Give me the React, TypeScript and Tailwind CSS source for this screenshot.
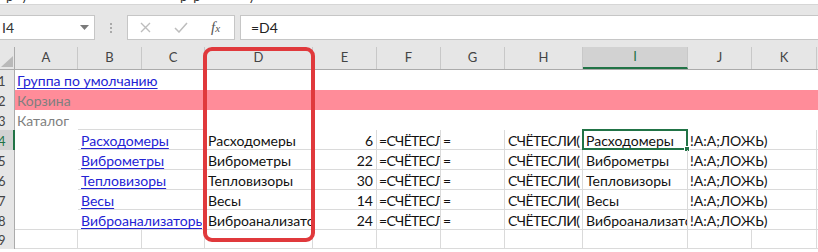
import React from 'react';

const COLS = [
  { name: 'A', w: 'w-[63px]' },
  { name: 'B', w: 'w-[64px]' },
  { name: 'C', w: 'w-[63px]' },
  { name: 'D', w: 'w-[108px]' },
  { name: 'E', w: 'w-[64px]' },
  { name: 'F', w: 'w-[64px]' },
  { name: 'G', w: 'w-[64px]' },
  { name: 'H', w: 'w-[78px]' },
  { name: 'I', w: 'w-[105px]' },
  { name: 'J', w: 'w-[64px]' },
  { name: 'K', w: 'w-[65px]' },
];

const ITEMS = [
  { name: 'Расходомеры', count: 6 },
  { name: 'Виброметры', count: 22 },
  { name: 'Тепловизоры', count: 30 },
  { name: 'Весы', count: 14 },
  { name: 'Виброанализаторы', count: 24 },
];

const grid = 'border-[#dadada]';
const link = 'text-[#2323d4] underline underline-offset-2 decoration-1';

function RowHead({ n, active = false }: { n: number; active?: boolean }) {
  return (
    <div
      className={`w-[15px] shrink-0 overflow-hidden flex items-center pt-[1px] leading-[20px] text-[13px] ${
        active
          ? 'bg-[#d2d2d2] text-[#217346] border-r-2 border-[#217346]'
          : 'bg-[#e6e6e6] text-[#444] border-r border-[#ababab]'
      }`}
    >
      <span className="-ml-[2px]">{n}</span>
    </div>
  );
}

function FormulaBar() {
  return (
    <>
      {/* clipped text from the ribbon above */}
      <div className="flex h-[5px] overflow-hidden bg-white text-[13px] leading-none text-[#333] border-b border-[#d6d6d6]">
        <span className="ml-[6px] -mt-[10px]">р</span>
        <span className="ml-[8px] -mt-[10px]">у</span>
        <span className="ml-[152px] -mt-[10px]">р</span>
        <span className="ml-[6px] -mt-[10px]">р</span>
        <span className="ml-[48px] -mt-[10px]">у</span>
      </div>
      <div className="bg-[#e6e6e6] pt-[10px] pb-[7px]">
        <div className="flex h-[25px] items-stretch">
          <div className="w-[95px] bg-white border border-l-0 border-[#c6c6c6] flex items-center justify-between pr-[5px]">
            <span className="pl-[2px] text-[14px] text-[#333]">I4</span>
            <svg width="9" height="5" viewBox="0 0 9 5">
              <path d="M0 0h9L4.5 5z" fill="#7a7a7a" />
            </svg>
          </div>
          <div className="w-[32px] flex flex-col items-center justify-center gap-[2px]">
            <span className="w-[2px] h-[2px] bg-[#a9a9a9]" />
            <span className="w-[2px] h-[2px] bg-[#a9a9a9]" />
            <span className="w-[2px] h-[2px] bg-[#a9a9a9]" />
          </div>
          <div className="w-[108px] bg-white border border-[#c6c6c6] flex items-center">
            <svg className="ml-[12px]" width="11" height="11" viewBox="0 0 11 11">
              <path d="M1 1l9 9M10 1l-9 9" stroke="#bdbdbd" strokeWidth="1.4" />
            </svg>
            <svg className="ml-[23px]" width="14" height="11" viewBox="0 0 14 11">
              <path d="M1 6l4 4 8-9" stroke="#bdbdbd" strokeWidth="1.5" fill="none" />
            </svg>
            <span className="ml-[23px] font-['Liberation_Serif',serif] italic text-[15px] text-[#555] leading-none">
              f<span className="text-[11px]">x</span>
            </span>
          </div>
          <div className="flex-1 ml-[5px] bg-white border border-r-0 border-[#c6c6c6] flex items-center pl-[10px] text-[14px] text-[#222]">
            =D4
          </div>
        </div>
      </div>
    </>
  );
}

function HeaderRow() {
  return (
    <div className="flex h-[23px] bg-[#e6e6e6] border-b border-[#ababab] text-[13px] text-[#444]">
      <div className="w-[15px] shrink-0 border-r border-[#ababab] flex items-end justify-start pb-[2px] pl-[1px]">
        <svg width="12" height="11" viewBox="0 0 12 11">
          <path d="M12 0v11H0z" fill="#b9b9b9" />
        </svg>
      </div>
      {COLS.map((c) =>
        c.name === 'I' ? (
          <div
            key={c.name}
            className={`${c.w} shrink-0 bg-[#d2d2d2] border-b-2 border-[#217346] border-r border-r-[#c8c8c8] flex items-center justify-center text-[#217346]`}
          >
            {c.name}
          </div>
        ) : (
          <div key={c.name} className={`${c.w} shrink-0 border-r border-[#c8c8c8] flex items-center justify-center`}>
            {c.name}
          </div>
        )
      )}
      <div className="flex-1" />
    </div>
  );
}

function PlainRow({ n, children, pink = false, line = false }: { n: number; children?: React.ReactNode; pink?: boolean; line?: boolean }) {
  return (
    <div className="flex h-[20px]">
      <RowHead n={n} />
      <div className={`flex-1 flex relative ${pink ? 'bg-[#ff8c99]' : 'bg-white'}`}>
        <div className="w-[63px] shrink-0 whitespace-nowrap overflow-visible pt-[2px] leading-[18px] pl-[2px] text-[14px]">{children}</div>
        {line && <div className={`w-[127px] shrink-0 border-b ${grid}`} />}
      </div>
    </div>
  );
}

function DataRow({ n, name, count, active }: { n: number; name: string; count: number; active: boolean }) {
  const cell = `shrink-0 border-b ${grid} pt-[2px] leading-[17px] text-[14px] whitespace-nowrap`;
  return (
    <div className="flex h-[20px] text-[#111]">
      <RowHead n={n} active={active} />
      <div className="w-[63px] shrink-0" />
      <div className={`w-[64px] ${cell}`}>
        <span className={`block w-[124px] overflow-hidden pl-[3px] ${link}`}>{name}</span>
      </div>
      <div className={`w-[63px] ${cell} border-r`} />
      <div className={`w-[108px] ${cell} border-r overflow-hidden pl-[3px]`}>{name}</div>
      <div className={`w-[64px] ${cell} border-r text-right pr-[3px]`}>{count}</div>
      <div className={`w-[64px] ${cell} border-r overflow-hidden pl-[2px] tracking-[-0.7px]`}>=СЧЁТЕСЛ</div>
      <div className={`w-[64px] ${cell} border-r pl-[2px]`}>=</div>
      <div className={`w-[78px] ${cell} border-r overflow-hidden pl-[3px] tracking-[-0.6px]`}>СЧЁТЕСЛИ(</div>
      <div className={`w-[105px] ${cell} border-r pl-[3px] relative`}>
        <span className="block overflow-hidden">{name}</span>
        {active && (
          <>
            <div className="absolute -left-[1px] -top-[1px] -right-[1px] -bottom-[1px] border-2 border-[#217346]" />
            <div className="absolute -right-[3px] -bottom-[3px] w-[6px] h-[6px] bg-[#217346] border border-white" />
          </>
        )}
      </div>
      <div className={`w-[64px] ${cell} pl-[2px]`}>!A:A;ЛОЖЬ)</div>
      <div className={`w-[65px] ${cell} border-r`} />
      <div className={`flex-1 ${cell}`} />
    </div>
  );
}

function EmptyRow({ n }: { n: number }) {
  return (
    <div className="flex h-[20px] border-t border-[#dadada] -mt-[1px]">
      <RowHead n={n} />
      {COLS.map((c) => (
        <div key={c.name} className={`${c.w} shrink-0 border-r border-b ${grid}`} />
      ))}
      <div className={`flex-1 border-b ${grid}`} />
    </div>
  );
}

export default function App() {
  return (
    <div className="relative w-[818px] h-[252px] overflow-hidden bg-white font-['Lato','Noto_Sans',sans-serif]">
      <FormulaBar />
      <HeaderRow />
      <PlainRow n={1}>
        <span className={link}>Группа по умолчанию</span>
      </PlainRow>
      <PlainRow n={2} pink>
        <span className="text-[#7f7f7f]">Корзина</span>
      </PlainRow>
      <PlainRow n={3} line>
        <span className="text-[#7f7f7f]">Каталог</span>
      </PlainRow>
      {ITEMS.map((it, i) => (
        <DataRow key={it.name} n={i + 4} name={it.name} count={it.count} active={i === 0} />
      ))}
      <EmptyRow n={9} />
      {/* red highlight around column D */}
      <div className="absolute left-[203px] top-[47px] w-[112px] h-[195px] border-4 border-[#e0393c] rounded-[9px]" />
    </div>
  );
}
